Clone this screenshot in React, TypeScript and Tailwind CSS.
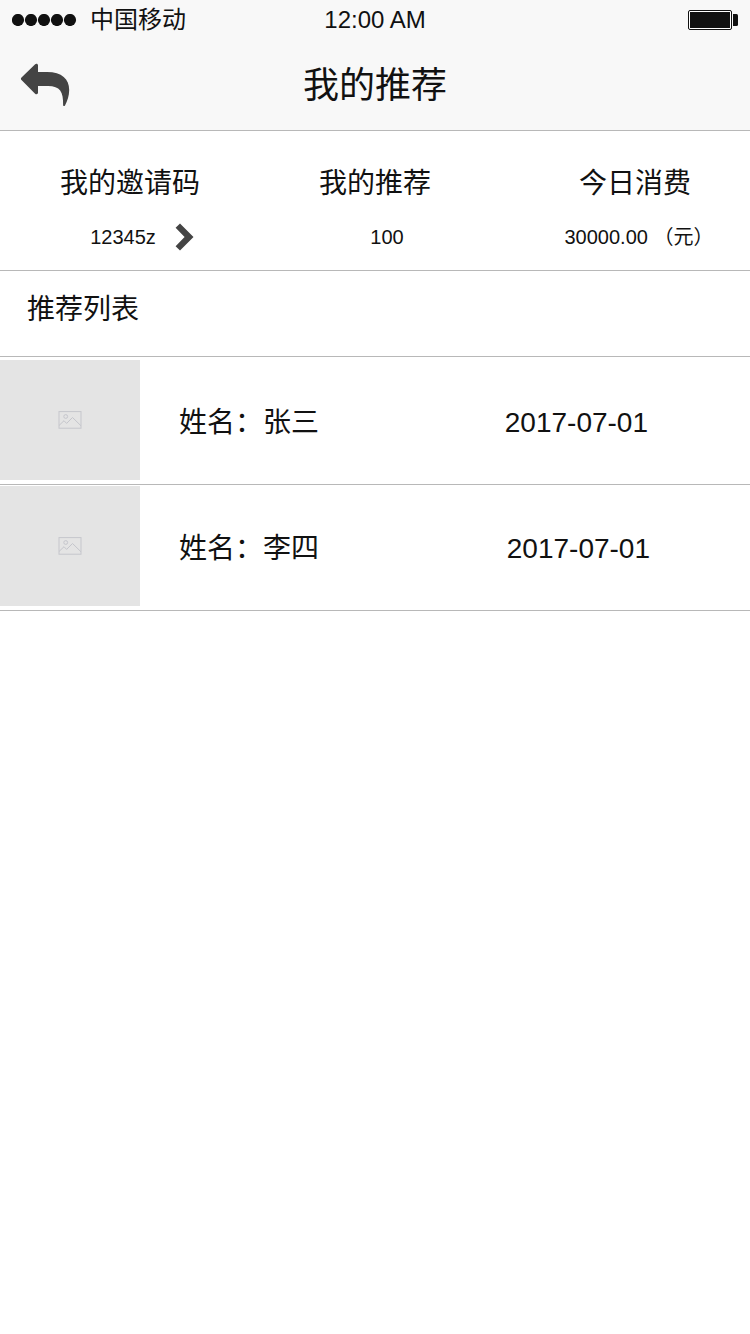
import React from 'react';

type Referral = { id: number; name: string; date: string; dateInset: string; spacing: string };

const referrals: Referral[] = [
  { id: 1, name: '张三', date: '2017-07-01', dateInset: 'pr-[102px]', spacing: 'pt-[3px] pb-1' },
  { id: 2, name: '李四', date: '2017-07-01', dateInset: 'pr-[100px]', spacing: 'pt-px pb-1' },
];

function StatusBar() {
  return (
    <div className="grid h-10 grid-cols-3 items-center px-3 text-2xl leading-10">
      <div className="flex items-center gap-[13px]">
        <svg className="h-3 w-[65px]" viewBox="0 0 65 12" fill="#111111" aria-hidden="true">
          <circle cx="6" cy="6" r="6.1" />
          <circle cx="19" cy="6" r="6.1" />
          <circle cx="32" cy="6" r="6.1" />
          <circle cx="45" cy="6" r="6.1" />
          <circle cx="58" cy="6" r="6.1" />
        </svg>
        <span>中国移动</span>
      </div>
      <span className="text-center">12:00 AM</span>
      <svg className="h-5 w-[50px] justify-self-end" viewBox="0 0 50 20" aria-hidden="true">
        <rect x="0.5" y="0.5" width="43" height="19" rx="1.5" fill="#ffffff" stroke="#111111" />
        <rect x="2" y="2" width="40" height="16" fill="#111111" />
        <path d="M45 4h3.500q1.500 0 1.500 1.500v9q0 1.500-1.500 1.500H45z" fill="#111111" />
      </svg>
    </div>
  );
}

function BackIcon() {
  return (
    <svg className="h-11 w-[50px]" viewBox="0 0 50 44" fill="#444444" aria-hidden="true">
      <path d="M1.500 14.400 14.900 1.500C16.300 0.300 18 0.900 18 2.600V9h9C42 9 49.200 16 49.200 27c0 6-1.900 11-4.200 15.400-.6 1.100-2 .7-1.900-.5C43.500 29 40 23 28 23H18v6.600c0 1.700-1.600 2.300-2.900 1.100L1.500 17c-.8-.8-.8-1.800 0-2.600z" />
    </svg>
  );
}

function ChevronIcon() {
  return (
    <svg className="h-7 w-[19px]" viewBox="0 0 19 28" fill="#444444" aria-hidden="true">
      <path d="M5 .5 18.500 14 5 27.500.6 23.200 9.600 14 .6 4.800z" />
    </svg>
  );
}

function PictureIcon() {
  return (
    <svg className="h-[18px] w-6" viewBox="0 0 24 18" fill="none" stroke="#c5c6cc" aria-hidden="true">
      <rect x="1" y="0.6" width="22" height="16.600" />
      <circle cx="7.700" cy="5.500" r="1.900" />
      <path d="M1 14.500 6 9.700l2.600 2.700L14.500 6.500 23 14.800" />
    </svg>
  );
}

export default function App() {
  return (
    <div className="min-h-screen bg-white font-['Liberation_Sans','Noto_Sans_CJK_SC',sans-serif] text-[#111111]">
      <header className="border-b border-[#b8b8b8] bg-[#f8f8f8]">
        <StatusBar />
        <div className="grid h-[90px] grid-cols-[1fr_auto_1fr] items-center px-5">
          <button type="button" aria-label="返回" className="justify-self-start">
            <BackIcon />
          </button>
          <h1 className="pt-0.5 text-4xl">我的推荐</h1>
        </div>
      </header>

      <main>
        <dl className="grid grid-cols-[26fr_23fr_26fr] border-b border-[#b8b8b8] pt-[33px] pb-[13px] text-center">
          <div>
            <dt className="text-[28px] leading-10">我的邀请码</dt>
            <dd className="pt-[13px] pl-6 text-xl leading-10">
              <button type="button" className="inline-flex h-10 items-center gap-[19px] align-top">
                12345z
                <ChevronIcon />
              </button>
            </dd>
          </div>
          <div>
            <dt className="text-[28px] leading-10">我的推荐</dt>
            <dd className="pt-[13px] pl-6 text-xl leading-10">100</dd>
          </div>
          <div className="pl-[30px]">
            <dt className="text-[28px] leading-10">今日消费</dt>
            <dd className="pt-[13px] pl-2 text-xl leading-10">30000.00 （元）</dd>
          </div>
        </dl>

        <h2 className="border-b border-[#b8b8b8] px-[27px] pt-[19px] pb-[26px] text-[28px] leading-10">推荐列表</h2>

        <ul>
          {referrals.map((r) => (
            <li key={r.id} className={`flex items-center border-b border-[#b8b8b8] text-[28px] ${r.spacing}`}>
              <div className="flex h-[120px] w-[140px] items-center justify-center bg-[#e4e4e4]">
                <PictureIcon />
              </div>
              <div className={`flex flex-1 justify-between pt-1.5 pl-[39px] leading-10 ${r.dateInset}`}>
                <span>姓名：{r.name}</span>
                <time dateTime={r.date}>{r.date}</time>
              </div>
            </li>
          ))}
        </ul>
      </main>
    </div>
  );
}
